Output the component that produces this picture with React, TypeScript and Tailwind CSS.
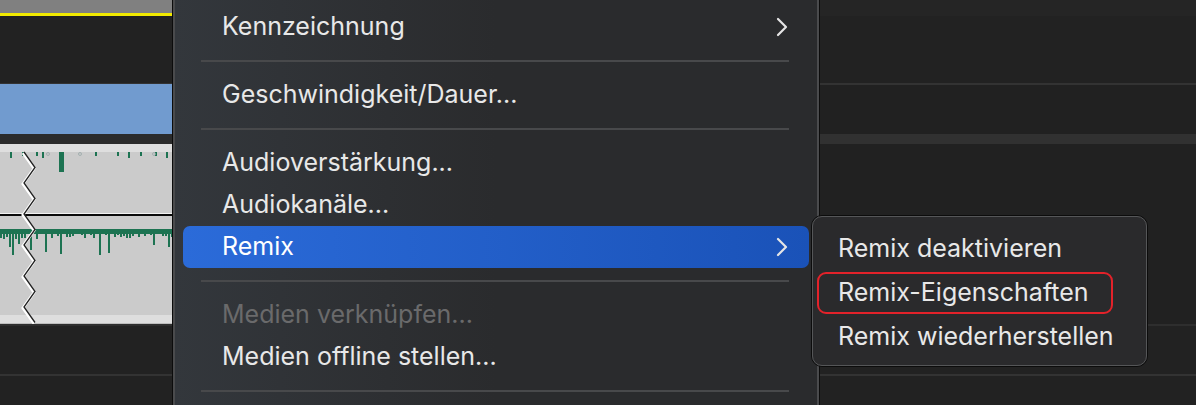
import React from "react";

const FONT = { fontFamily: 'Inter, "Noto Sans", "Liberation Sans", sans-serif' };

function rand(seed: number) {
  const x = Math.sin(seed * 127.1 + 311.7) * 43758.5453;
  return x - Math.floor(x);
}

function TopWave() {
  const ticks = [10, 22, 36, 42, 95, 117, 128, 140, 155, 166];
  const dots = [48, 80, 154];
  return (
    <svg width="172" height="62" className="absolute left-0 top-0">
      {ticks.map((x, i) => (
        <rect key={i} x={x} y={0} width={2} height={i % 3 === 0 ? 6 : 4} fill="#1d7352" />
      ))}
      {dots.map((x, i) => (
        <circle key={i} cx={x} cy={2} r={1.5} fill="none" stroke="#9aa" strokeWidth={0.8} />
      ))}
      <rect x={59} y={0} width={5} height={20} fill="#1d7352" />
    </svg>
  );
}

function BottomWave() {
  const items = [];
  for (let i = 0; i < 58; i++) {
    const x = i * 3;
    const r = rand(i + 3);
    let h = 3 + Math.floor(r * 8);
    if (r > 0.85) h = 14 + Math.floor(rand(i + 50) * 12);
    items.push(<rect key={i} x={x} y={14} width={2} height={h} fill="#1d7352" />);
  }
  return (
    <svg width="172" height="60" className="absolute left-0 top-0">
      <rect x={0} y={13} width={172} height={5} fill="#1d7352" />
      {items}
    </svg>
  );
}

function ZigZag() {
  const pts: string[] = [];
  let y = 151;
  let left = true;
  while (y < 330) {
    pts.push(`${left ? 24 : 35},${y - 143}`);
    y += 15.5;
    left = !left;
  }
  const p = pts.join(" ");
  return (
    <svg width="60" height="180" className="absolute left-0 top-0">
      <polyline points={p} fill="none" stroke="#ffffff" strokeWidth={3} transform="translate(-1,1)" />
      <polyline points={p} fill="none" stroke="#222" strokeWidth={1.3} />
    </svg>
  );
}

function Chevron() {
  return (
    <svg width="14" height="20" viewBox="0 0 14 20" className="shrink-0">
      <polyline points="3,2 11,10 3,18" fill="none" stroke="#e6e6e6" strokeWidth={2.2} strokeLinecap="round" strokeLinejoin="round" />
    </svg>
  );
}

function Sep() {
  return (
    <div className="h-[26px] flex items-center pl-[26px] pr-[28px]">
      <div className="h-[2px] w-full bg-[#48494b]" />
    </div>
  );
}

function Item({ label, sub, active, disabled }: { label: string; sub?: boolean; active?: boolean; disabled?: boolean }) {
  return (
    <div
      className={
        "h-[42px] mx-[8px] rounded-[7px] flex items-center justify-between pl-[39px] pr-[20px] text-[25px] " +
        (active ? "bg-gradient-to-r from-[#2b6bd9] to-[#1a52b8] text-white" : disabled ? "text-[#6a6a6b]" : "text-[#e8e8e8]")
      }
    >
      <span>{label}</span>
      {sub && <Chevron />}
    </div>
  );
}

export default function App() {
  return (
    <div className="relative w-[1196px] h-[405px] overflow-hidden bg-[#222222]" style={FONT}>
      {/* background timeline rows */}
      <div className="flex flex-col w-full">
        <div className="flex h-[16px]">
          <div className="w-[172px] flex flex-col">
            <div className="h-[13px] bg-[#808080]" />
            <div className="h-[3px] bg-[#f2ea00]" />
          </div>
          <div className="flex-1 bg-[#252525]" />
        </div>
        <div className="flex h-[67px] bg-[#222222]" />
        <div className="h-[1px] bg-[#333333]" />
        <div className="flex h-[50px]">
          <div className="w-[172px] bg-[#719bcf]" />
          <div className="flex-1 bg-[#212121] border-t border-[#333333]" />
        </div>
        <div className="flex h-[10px]">
          <div className="w-[172px] bg-[#2b2b2b]" />
          <div className="flex-1 bg-[#313131]" />
        </div>
        <div className="flex h-[180px]">
          <div className="w-[172px] relative flex flex-col">
            <div className="h-[8px] bg-[#dedede]" />
            <div className="h-[61px] bg-[#cbcbcb] relative">
              <TopWave />
            </div>
            <div className="h-[1px] bg-[#f2f2f2]" />
            <div className="h-[2px] bg-[#0a0a0a]" />
            <div className="h-[99px] bg-[#cbcbcb] relative">
              <BottomWave />
            </div>
            <div className="h-[8px] bg-[#dedede]" />
            <div className="h-[1px] bg-[#bdbdbd]" />
            <ZigZag />
          </div>
          <div className="flex-1 bg-[#212121]" />
        </div>
        <div className="h-[2px] bg-[#2e2e2e]" />
        <div className="h-[48px] bg-[#222222]" />
        <div className="h-[2px] bg-[#333333]" />
        <div className="h-[30px] bg-[#222222]" />
      </div>

      {/* context menu */}
      <div className="absolute left-[172px] top-[-20px] w-[648px] h-[450px] border-l border-r border-[#0c0c0c]">
        <div className="w-full h-full border-l-2 border-r-2 border-[#4a4b4d] bg-gradient-to-r from-[#33373c] via-[#2a2b2d] to-[#2a2b2d] pt-[26px]">
          <Item label="Kennzeichnung" sub />
          <Sep />
          <Item label="Geschwindigkeit/Dauer..." />
          <Sep />
          <Item label="Audioverstärkung..." />
          <Item label="Audiokanäle..." />
          <Item label="Remix" sub active />
          <Sep />
          <Item label="Medien verknüpfen..." disabled />
          <Item label="Medien offline stellen..." />
          <Sep />
        </div>
      </div>

      {/* submenu */}
      <div className="absolute left-[811px] top-[215px] w-[337px] h-[152px] rounded-[11px] border border-[#0c0c0c]">
        <div className="w-full h-full rounded-[10px] border border-[#555658] bg-[#2a2a2c] pt-[9px] text-[25px] text-[#e8e8e8]">
          <div className="h-[45px] flex items-center pl-[25px]">Remix deaktivieren</div>
          <div className="h-[44px] flex items-center px-[4px]">
            <div className="h-[42px] w-[296px] flex items-center pl-[19px] rounded-[9px] border-2 border-[#e3222a]">
              Remix-Eigenschaften
            </div>
          </div>
          <div className="h-[44px] flex items-center pl-[25px]">Remix wiederherstellen</div>
        </div>
      </div>
    </div>
  );
}
